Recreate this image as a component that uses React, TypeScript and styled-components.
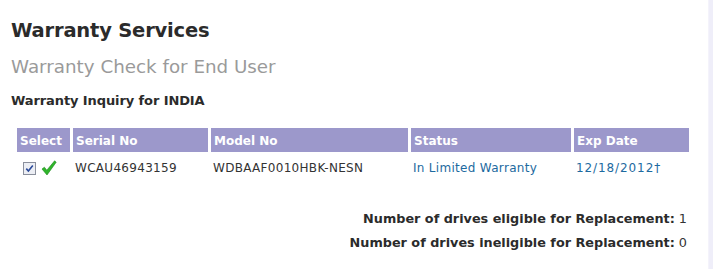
import React from 'react';
import styled, {createGlobalStyle} from 'styled-components';

const GlobalStyle = createGlobalStyle`
    html, body {
        margin: 0;
        padding: 0;
        background: #fff;
    }
    body {
        font-family: "DejaVu Sans", Verdana, sans-serif;
        color: #333;
    }
`;

const Page = styled.div`
    display: flex;
    width: 713px;
    height: 269px;
    overflow: hidden;
`;

const Content = styled.main`
    flex: 1;
    padding: 18px 0 0 11px;
`;

const SideStrip = styled.div`
    width: 4px;
    background: #efeef9;
    border-left: 1px solid #f4f3fb;
`;

const Title = styled.h1`
    margin: 0;
    font-size: 19.5px;
    font-weight: bold;
    color: #2b2b2b;
    line-height: 26px;
    letter-spacing: -0.2px;
`;

const Subtitle = styled.h2`
    margin: 11px 0 0;
    font-size: 18.3px;
    font-weight: normal;
    color: #9a9a9a;
    line-height: 24px;
`;

const Region = styled.h3`
    margin: 13px 0 0;
    font-size: 13px;
    font-weight: bold;
    color: #2b2b2b;
    line-height: 17px;
    letter-spacing: -0.1px;
`;

const Table = styled.table`
    margin: 19px 0 0 3px;
    border-collapse: separate;
    border-spacing: 3px 0;
    font-size: 12px;
`;

const HeadCell = styled.th<{$width: number}>`
    width: ${({$width}) => $width}px;
    height: 24px;
    padding: 2px 0 0 3px;
    box-sizing: border-box;
    background: #9c98cb;
    color: #fff;
    font-weight: bold;
    text-align: left;
`;

const Cell = styled.td<{$link?: boolean}>`
    height: 30px;
    padding: 1px 0 0 2px;
    color: ${({$link}) => ($link ? '#1d6aa0' : '#333')};
    letter-spacing: 0.3px;
`;

const DateCell = styled(Cell)`
    letter-spacing: 0.9px;
`;

const SelectBox = styled.span`
    display: inline-flex;
    align-items: center;
    gap: 5px;
    padding-left: 4px;
    vertical-align: middle;
`;

const Summary = styled.div`
    display: flex;
    flex-direction: column;
    align-items: flex-end;
    gap: 7px;
    margin: 27px 21px 0 0;
    font-size: 12.8px;
    line-height: 17px;
`;

const SummaryLine = styled.div`
    color: #333;
`;

const SummaryLabel = styled.span`
    font-weight: bold;
    color: #2b2b2b;
`;

const Checkbox = () => (
    <svg width="13" height="13" viewBox="0 0 13 13">
        <rect x="0.5" y="0.5" width="12" height="12" fill="#eceef4" stroke="#8a8f9c" />
        <path d="M3.3 6.6 L5.4 9 L9.8 3.6" fill="none" stroke="#2a4a9a" strokeWidth="1.6" />
    </svg>
);

const GreenCheck = () => (
    <svg width="16" height="16" viewBox="0 0 16 16">
        <path d="M1 9 L3.4 7.2 L5.8 10.2 L13.6 0.8 L15.2 2.2 L6 15 Z" fill="#2fb52a" stroke="#1d8a1d" strokeWidth="0.6" />
    </svg>
);

const App = () => (
    <>
        <GlobalStyle />
        <Page>
            <Content>
                <Title>Warranty Services</Title>
                <Subtitle>Warranty Check for End User</Subtitle>
                <Region>Warranty Inquiry for INDIA</Region>
                <Table>
                    <thead>
                        <tr>
                            <HeadCell $width={53}>Select</HeadCell>
                            <HeadCell $width={135}>Serial No</HeadCell>
                            <HeadCell $width={197}>Model No</HeadCell>
                            <HeadCell $width={160}>Status</HeadCell>
                            <HeadCell $width={115}>Exp Date</HeadCell>
                        </tr>
                    </thead>
                    <tbody>
                        <tr>
                            <Cell>
                                <SelectBox>
                                    <Checkbox />
                                    <GreenCheck />
                                </SelectBox>
                            </Cell>
                            <Cell>WCAU46943159</Cell>
                            <Cell>WDBAAF0010HBK-NESN</Cell>
                            <Cell $link>In Limited Warranty</Cell>
                            <DateCell $link>12/18/2012†</DateCell>
                        </tr>
                    </tbody>
                </Table>
                <Summary>
                    <SummaryLine>
                        <SummaryLabel>Number of drives eligible for Replacement:</SummaryLabel> 1
                    </SummaryLine>
                    <SummaryLine>
                        <SummaryLabel>Number of drives ineligible for Replacement:</SummaryLabel> 0
                    </SummaryLine>
                </Summary>
            </Content>
            <SideStrip />
        </Page>
    </>
);

export default App;
